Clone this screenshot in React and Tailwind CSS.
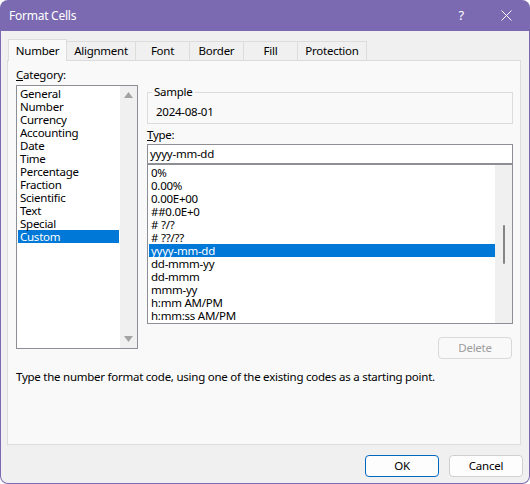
import React from 'react';

const categories = [
  'General',
  'Number',
  'Currency',
  'Accounting',
  'Date',
  'Time',
  'Percentage',
  'Fraction',
  'Scientific',
  'Text',
  'Special',
  'Custom',
];

const formats = [
  '0%',
  '0.00%',
  '0.00E+00',
  '##0.0E+0',
  '# ?/?',
  '# ??/??',
  'yyyy-mm-dd',
  'dd-mmm-yy',
  'dd-mmm',
  'mmm-yy',
  'h:mm AM/PM',
  'h:mm:ss AM/PM',
];

const tabs = ['Alignment', 'Font', 'Border', 'Fill', 'Protection'];
const tabWidths = ['w-[69px]', 'w-[54px]', 'w-[54px]', 'w-[54px]', 'w-[69px]'];

const App = () => {
  return (
    <div
      className="w-[530px] h-[484px] bg-[#7b6ab1] rounded-[8px] flex flex-col overflow-hidden text-[11.5px] tracking-[-0.25px] text-black"
      style={{ fontFamily: '"Noto Sans", "Open Sans", sans-serif' }}
    >
      {/* Title bar */}
      <div className="h-[31px] flex items-center pl-[9px] pr-[18px] text-white text-[12px] shrink-0">
        <span>Format Cells</span>
        <span className="ml-auto mr-[37px] text-[13px]">?</span>
        <svg width="11" height="11" viewBox="0 0 11 11" stroke="white" strokeWidth="1">
          <path d="M0.5 0.5 L10.5 10.5 M10.5 0.5 L0.5 10.5" />
        </svg>
      </div>

      {/* Body */}
      <div className="flex-1 mx-[1px] mb-[1px] bg-[#f0f0f0] rounded-b-[7px] flex flex-col">
        {/* Tabs */}
        <div className="h-[29px] flex items-end pl-[7px] shrink-0">
          <div className="relative z-10 -mb-px w-[59px] h-[22px] bg-[#f9f9f9] border border-b-0 border-[#dcdcdc] flex items-center justify-center">
            Number
          </div>
          {tabs.map((t, i) => (
            <div
              key={t}
              className={`${tabWidths[i]} h-[19px] bg-[#f0f0f0] border border-b-0 border-l-0 border-[#dcdcdc] flex items-center justify-center`}
            >
              {t}
            </div>
          ))}
        </div>

        {/* Panel */}
        <div className="ml-[6px] w-[514px] h-[385px] border border-[#dcdcdc] bg-[#f9f9f9] pt-[6px] pl-[8px] shrink-0">
          <div className="flex gap-[9px]">
            {/* Category */}
            <div className="w-[122px] flex flex-col">
              <div className="h-[16px] leading-[16px]">
                <span className="underline">C</span>ategory:
              </div>
              <div className="mt-[2px] h-[264px] border border-[#8d8e96] bg-white flex">
                <div className="flex-1 pt-[1px] px-[1px]">
                  {categories.map((c) => (
                    <div
                      key={c}
                      className={`h-[13px] leading-[13px] pl-[2px] ${
                        c === 'Custom' ? 'bg-[#0078d7] text-white' : ''
                      }`}
                    >
                      {c}
                    </div>
                  ))}
                </div>
                <div className="w-[17px] bg-[#f0f0f0] flex flex-col items-center justify-between py-[6px]">
                  <svg width="9" height="6" viewBox="0 0 9 6">
                    <path d="M4.5 0 L9 6 L0 6 Z" fill="#a3a3a3" />
                  </svg>
                  <svg width="9" height="6" viewBox="0 0 9 6">
                    <path d="M0 0 L9 0 L4.5 6 Z" fill="#a3a3a3" />
                  </svg>
                </div>
              </div>
            </div>

            {/* Right side */}
            <div className="w-[366px] flex flex-col">
              <div className="mt-[25px] relative h-[32px] w-[366px] border border-[#dcdcdc] pl-[8px] pt-[11px] leading-[16px]">
                <span className="absolute -top-[9px] left-[4px] px-[2px] bg-[#f9f9f9] leading-[16px]">
                  Sample
                </span>
                2024-08-01
              </div>
              <div className="mt-[3px] h-[16px] leading-[16px]">
                <span className="underline">T</span>ype:
              </div>
              <div className="mt-[1px] h-[20px] border border-[#8d8e96] bg-white pl-[2px] leading-[18px]">
                yyyy-mm-dd
              </div>
              <div className="h-[160px] border border-[#8d8e96] bg-white flex">
                <div className="flex-1 pt-[1px] pl-[1px]">
                  {formats.map((f) => (
                    <div
                      key={f}
                      className={`h-[13px] leading-[13px] pl-[2px] ${
                        f === 'yyyy-mm-dd' ? 'bg-[#0078d7] text-white' : ''
                      }`}
                    >
                      {f}
                    </div>
                  ))}
                </div>
                <div className="w-[17px] bg-[#f0f0f0] flex justify-center pt-[60px]">
                  <div className="w-[2px] h-[39px] bg-[#858585] rounded-full" />
                </div>
              </div>
              <div className="mt-[13px] flex justify-end pr-[1px]">
                <div className="w-[74px] h-[22px] border border-[#d9d9d9] rounded-[4px] bg-[#f9f9f9] text-[#9d9d9d] flex items-center justify-center">
                  Delete
                </div>
              </div>
            </div>
          </div>
          <div className="mt-[10px] leading-[16px]">
            Type the number format code, using one of the existing codes as a starting point.
          </div>
        </div>

        {/* Footer buttons */}
        <div className="mt-[10px] flex justify-end gap-[10px] pr-[6px]">
          <div className="w-[74px] h-[22px] border border-[#0067c0] rounded-[4px] bg-[#fdfdfd] flex items-center justify-center">
            OK
          </div>
          <div className="w-[74px] h-[22px] border border-[#d0d0d0] rounded-[4px] bg-[#fdfdfd] flex items-center justify-center">
            Cancel
          </div>
        </div>
      </div>
    </div>
  );
};

export default App;
